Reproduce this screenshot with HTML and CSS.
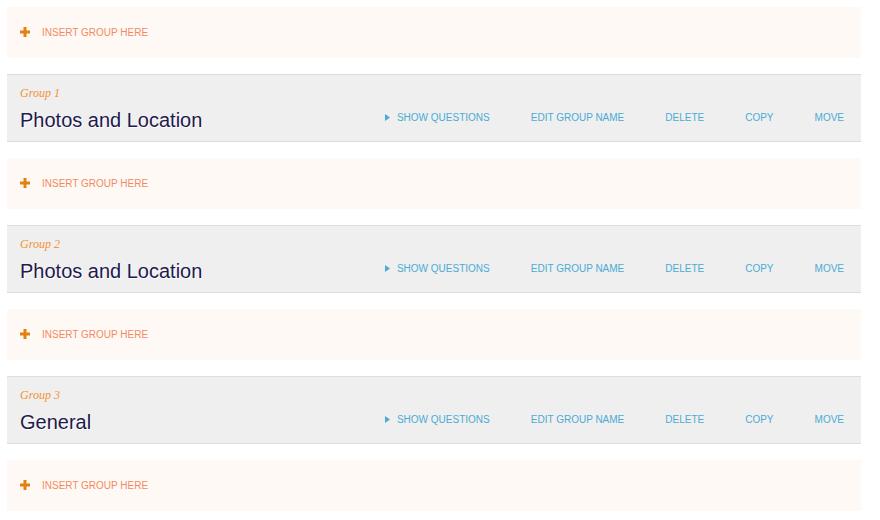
FILE: index.html
```html
<!DOCTYPE html>
<html>
<head>
<meta charset="utf-8">
<link rel="stylesheet" href="styles.css">
</head>
<body>
<div class="list">
  <div class="insert">
    <svg class="plus" width="10" height="10" viewBox="0 0 10 10"><path d="M3.5 0h3v3.5H10v3H6.5V10h-3V6.5H0v-3h3.5z"/></svg>
    <span class="insert-text">Insert group here</span>
  </div>

  <div class="group">
    <div class="group-info">
      <div class="group-label">Group 1</div>
      <div class="group-title">Photos and Location</div>
    </div>
    <div class="actions">
      <a class="action show"><svg class="tri" width="5" height="7" viewBox="0 0 5 7"><path d="M0 0L5 3.5L0 7z"/></svg>Show questions</a>
      <a class="action">Edit group name</a>
      <a class="action">Delete</a>
      <a class="action">Copy</a>
      <a class="action">Move</a>
    </div>
  </div>

  <div class="insert">
    <svg class="plus" width="10" height="10" viewBox="0 0 10 10"><path d="M3.5 0h3v3.5H10v3H6.5V10h-3V6.5H0v-3h3.5z"/></svg>
    <span class="insert-text">Insert group here</span>
  </div>

  <div class="group">
    <div class="group-info">
      <div class="group-label">Group 2</div>
      <div class="group-title">Photos and Location</div>
    </div>
    <div class="actions">
      <a class="action show"><svg class="tri" width="5" height="7" viewBox="0 0 5 7"><path d="M0 0L5 3.5L0 7z"/></svg>Show questions</a>
      <a class="action">Edit group name</a>
      <a class="action">Delete</a>
      <a class="action">Copy</a>
      <a class="action">Move</a>
    </div>
  </div>

  <div class="insert">
    <svg class="plus" width="10" height="10" viewBox="0 0 10 10"><path d="M3.5 0h3v3.5H10v3H6.5V10h-3V6.5H0v-3h3.5z"/></svg>
    <span class="insert-text">Insert group here</span>
  </div>

  <div class="group">
    <div class="group-info">
      <div class="group-label">Group 3</div>
      <div class="group-title">General</div>
    </div>
    <div class="actions">
      <a class="action show"><svg class="tri" width="5" height="7" viewBox="0 0 5 7"><path d="M0 0L5 3.5L0 7z"/></svg>Show questions</a>
      <a class="action">Edit group name</a>
      <a class="action">Delete</a>
      <a class="action">Copy</a>
      <a class="action">Move</a>
    </div>
  </div>

  <div class="insert">
    <svg class="plus" width="10" height="10" viewBox="0 0 10 10"><path d="M3.5 0h3v3.5H10v3H6.5V10h-3V6.5H0v-3h3.5z"/></svg>
    <span class="insert-text">Insert group here</span>
  </div>
</div>
</body>
</html>
```

FILE: styles.css
```css
html, body {
  margin: 0;
  padding: 0;
  background: #ffffff;
}

body {
  padding: 7px;
  font-family: "Liberation Sans", Arial, Helvetica, sans-serif;
}

.list {
  width: 854px;
  display: flex;
  flex-direction: column;
  gap: 16px;
}

.insert {
  height: 51px;
  background: #fff9f6;
  display: flex;
  align-items: center;
  padding-left: 13px;
  box-sizing: border-box;
}

.plus {
  fill: #e3800f;
  margin-top: -1px;
}

.insert-text {
  margin-left: 12px;
  font-size: 10px;
  line-height: 14px;
  text-transform: uppercase;
  color: #f28a5e;
}

.group {
  height: 68px;
  box-sizing: border-box;
  background: #efefef;
  border-top: 1px solid #dddddd;
  border-bottom: 1px solid #dddddd;
  padding: 11px 17px 9px 13px;
  display: flex;
  align-items: flex-end;
  justify-content: space-between;
}

.group-info {
  display: flex;
  flex-direction: column;
}

.group-label {
  font-family: "Liberation Serif", Georgia, serif;
  font-style: italic;
  font-size: 12px;
  line-height: 14px;
  color: #f39237;
  margin-bottom: 8px;
}

.group-title {
  font-size: 20px;
  line-height: 24px;
  color: #1f1a4f;
  text-shadow: 1px 1px 0 #ffffff;
}

.actions {
  display: flex;
  align-items: center;
  gap: 41px;
  margin-bottom: 7px;
}

.action {
  font-size: 10px;
  line-height: 14px;
  text-transform: uppercase;
  color: #4aabd5;
  display: flex;
  align-items: center;
}

.tri {
  fill: #4aabd5;
  margin-right: 7px;
  margin-top: -1px;
}
```
